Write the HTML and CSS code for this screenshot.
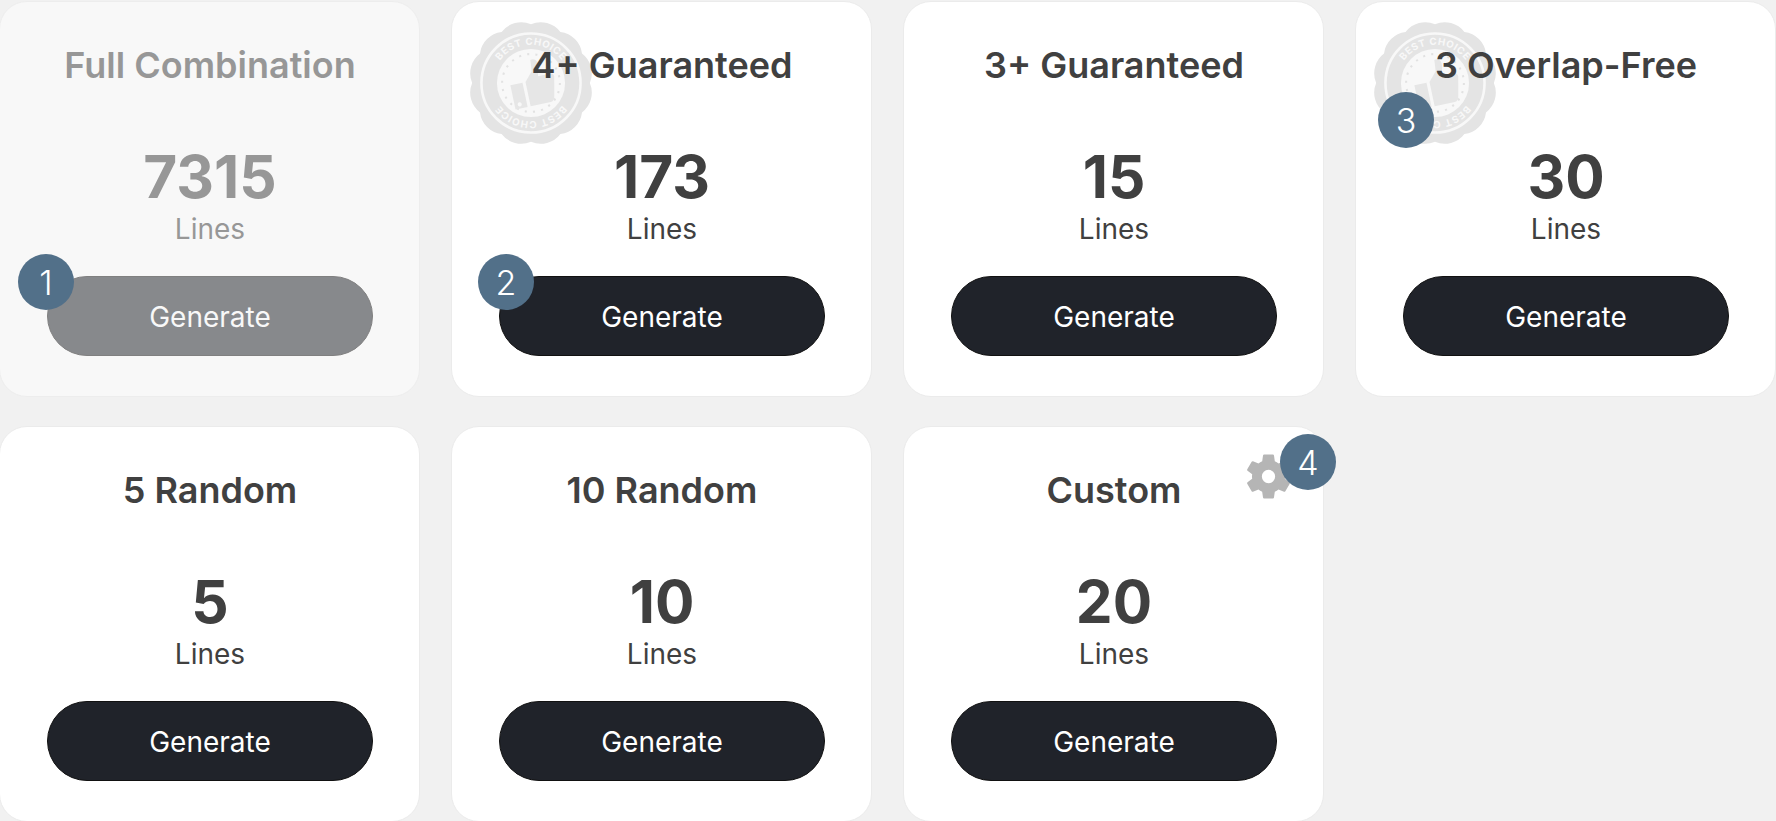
FILE: index.html
```html
<!DOCTYPE html>
<html lang="en">
<head>
  <meta charset="UTF-8" />
  <meta name="viewport" content="width=device-width, initial-scale=1.0" />
  <title>Generate Lines</title>
  <link rel="stylesheet" href="styles.css">
</head>
<body>
  <main class="plans">
    <div class="slot">
      <div class="card muted">
        <h3>Full Combination</h3>
        <div class="count">7315</div>
        <div class="unit">Lines</div>
        <button class="generate">Generate</button>
      </div>
      <span class="badge badge-1">1</span>
    </div>

    <div class="slot">
      <div class="card">
        <svg class="seal" viewBox="0 0 124 124">
          <path class="seal-bg" d="M119 62A24 24 0 0 1 111.4 90.5A24 24 0 0 1 90.5 111.4A24 24 0 0 1 62 119A24 24 0 0 1 33.5 111.4A24 24 0 0 1 12.6 90.5A24 24 0 0 1 5 62A24 24 0 0 1 12.6 33.5A24 24 0 0 1 33.5 12.6A24 24 0 0 1 62 5A24 24 0 0 1 90.5 12.6A24 24 0 0 1 111.4 33.5A24 24 0 0 1 119 62Z" />
          <circle class="seal-ring" cx="62" cy="62" r="48" />
          <circle class="seal-disc" cx="62" cy="62" r="33" />
          <path id="arc-top-a" fill="none" d="M25 62A37 37 0 0 1 99 62" />
          <path id="arc-bottom-a" fill="none" d="M99 62A37 37 0 0 1 25 62" />
          <text class="seal-text"><textPath href="#arc-top-a" startOffset="50%" text-anchor="middle">BEST CHOICE</textPath></text>
          <text class="seal-text"><textPath href="#arc-bottom-a" startOffset="50%" text-anchor="middle">BEST CHOICE</textPath></text>
          <circle class="seal-dots" cx="62" cy="62" r="28" />
          <g class="seal-thumb" transform="rotate(-12 62 62)">
            <path fill-rule="evenodd" d="M42 60h12v24H42zM47 78a2 2 0 1 0 .01 0z" />
            <path d="M57 60l8-9 1-11c5-1 7 3 6 8l-2 9h12c3 0 4 3 3 5l-4 19c-1 2-2 3-4 3H57z" />
          </g>
        </svg>
        <h3>4+ Guaranteed</h3>
        <div class="count">173</div>
        <div class="unit">Lines</div>
        <button class="generate">Generate</button>
      </div>
      <span class="badge badge-2">2</span>
    </div>

    <div class="slot">
      <div class="card">
        <h3>3+ Guaranteed</h3>
        <div class="count">15</div>
        <div class="unit">Lines</div>
        <button class="generate">Generate</button>
      </div>
    </div>

    <div class="slot">
      <div class="card">
        <svg class="seal" viewBox="0 0 124 124">
          <path class="seal-bg" d="M119 62A24 24 0 0 1 111.4 90.5A24 24 0 0 1 90.5 111.4A24 24 0 0 1 62 119A24 24 0 0 1 33.5 111.4A24 24 0 0 1 12.6 90.5A24 24 0 0 1 5 62A24 24 0 0 1 12.6 33.5A24 24 0 0 1 33.5 12.6A24 24 0 0 1 62 5A24 24 0 0 1 90.5 12.6A24 24 0 0 1 111.4 33.5A24 24 0 0 1 119 62Z" />
          <circle class="seal-ring" cx="62" cy="62" r="48" />
          <circle class="seal-disc" cx="62" cy="62" r="33" />
          <path id="arc-top-b" fill="none" d="M25 62A37 37 0 0 1 99 62" />
          <path id="arc-bottom-b" fill="none" d="M99 62A37 37 0 0 1 25 62" />
          <text class="seal-text"><textPath href="#arc-top-b" startOffset="50%" text-anchor="middle">BEST CHOICE</textPath></text>
          <text class="seal-text"><textPath href="#arc-bottom-b" startOffset="50%" text-anchor="middle">BEST CHOICE</textPath></text>
          <circle class="seal-dots" cx="62" cy="62" r="28" />
          <g class="seal-thumb" transform="rotate(-12 62 62)">
            <path fill-rule="evenodd" d="M42 60h12v24H42zM47 78a2 2 0 1 0 .01 0z" />
            <path d="M57 60l8-9 1-11c5-1 7 3 6 8l-2 9h12c3 0 4 3 3 5l-4 19c-1 2-2 3-4 3H57z" />
          </g>
        </svg>
        <h3>3 Overlap-Free</h3>
        <div class="count">30</div>
        <div class="unit">Lines</div>
        <button class="generate">Generate</button>
      </div>
      <span class="badge badge-3">3</span>
    </div>

    <div class="slot">
      <div class="card">
        <h3>5 Random</h3>
        <div class="count">5</div>
        <div class="unit">Lines</div>
        <button class="generate">Generate</button>
      </div>
    </div>

    <div class="slot">
      <div class="card">
        <h3>10 Random</h3>
        <div class="count">10</div>
        <div class="unit">Lines</div>
        <button class="generate">Generate</button>
      </div>
    </div>

    <div class="slot">
      <div class="card">
        <svg class="gear" viewBox="0 0 24 24">
          <path fill-rule="evenodd" d="M19.14 12.94c.04-.3.06-.61.06-.94 0-.32-.02-.64-.07-.94l2.03-1.58c.18-.14.23-.41.12-.61l-1.92-3.32c-.12-.22-.37-.29-.59-.22l-2.39.96c-.5-.38-1.03-.7-1.62-.94L14.4 2.81c-.04-.24-.24-.41-.48-.41h-3.84c-.24 0-.43.17-.47.41L9.25 5.35c-.59.24-1.13.57-1.62.94L5.24 5.33c-.22-.08-.47 0-.59.22L2.74 8.87c-.12.21-.08.47.12.61l2.03 1.58c-.05.3-.09.63-.09.94s.02.64.07.94l-2.03 1.58c-.18.14-.23.41-.12.61l1.92 3.32c.12.22.37.29.59.22l2.39-.96c.5.38 1.03.7 1.62.94l.36 2.54c.05.24.24.41.48.41h3.84c.24 0 .44-.17.47-.41l.36-2.54c.59-.24 1.13-.56 1.62-.94l2.39.96c.22.08.47 0 .59-.22l1.92-3.32c.12-.22.07-.47-.12-.61l-2.03-1.58zM12 14.9a2.9 2.9 0 1 1 0-5.8 2.9 2.9 0 0 1 0 5.8z" />
        </svg>
        <h3>Custom</h3>
        <div class="count">20</div>
        <div class="unit">Lines</div>
        <button class="generate">Generate</button>
      </div>
      <span class="badge badge-4">4</span>
    </div>
  </main>
</body>
</html>
```

FILE: styles.css
```css
* { margin: 0; padding: 0; box-sizing: border-box; }
body {
  font-family: 'Inter', sans-serif;
  background-color: #f1f1f1;
  color: #404040;
  overflow: hidden;
}
.plans {
  display: grid;
  width: 1777px;
  margin-left: -1px;
  grid-template-columns: repeat(4, 421px);
  column-gap: 31px;
  row-gap: 29px;
  padding-top: 1px;
}
.slot { position: relative; }
.card {
  position: relative;
  height: 396px;
  padding: 43px 46px 0 47px;
  display: flex;
  flex-direction: column;
  align-items: center;
  background-color: white;
  border: 1px solid #ebebeb;
  border-radius: 28px;
}
.card.muted { opacity: 0.5; }
.card h3 {
  position: relative;
  font-size: 36px;
  line-height: 40px;
  font-weight: 600;
  text-align: center;
}
.count {
  margin-top: 57px;
  font-size: 58.5px;
  line-height: 69px;
  font-weight: 700;
}
.unit {
  font-size: 28px;
  line-height: 36px;
  font-weight: 400;
}
.generate {
  margin-top: 29px;
  width: 326px;
  height: 80px;
  padding-top: 2px;
  font-family: inherit;
  font-size: 28px;
  color: white;
  background-color: #20232a;
  border: 1px solid #111;
  border-radius: 40px;
  cursor: pointer;
}
.badge {
  position: absolute;
  width: 56px;
  height: 56px;
  display: flex;
  align-items: center;
  justify-content: center;
  font-size: 34px;
  font-weight: 300;
  color: white;
  background-color: #527089;
  border-radius: 50%;
}
.badge-1 { left: 19px; top: 253px; }
.badge-2 { left: 27px; top: 253px; }
.badge-3 { left: 23px; top: 91px; }
.badge-4 { left: 377px; top: 8px; }
.seal {
  position: absolute;
  left: 15px;
  top: 17px;
  width: 128px;
  height: 128px;
}
.seal-bg { fill: #e4e4e4; }
.seal-ring { fill: none; stroke: #f8f8f8; stroke-width: 2.5; }
.seal-disc { fill: #f8f8f8; }
.seal-text {
  font-family: 'Inter', sans-serif;
  font-size: 9.5px;
  font-weight: 700;
  letter-spacing: 0.6px;
  fill: #f8f8f8;
}
.seal-dots { fill: none; stroke: #e2e2e2; stroke-width: 2; stroke-dasharray: 2 6; }
.seal-thumb { fill: #e6e6e6; }
.gear {
  position: absolute;
  left: 337px;
  top: 22px;
  width: 55px;
  height: 55px;
  fill: #b5b5b5;
}
```
